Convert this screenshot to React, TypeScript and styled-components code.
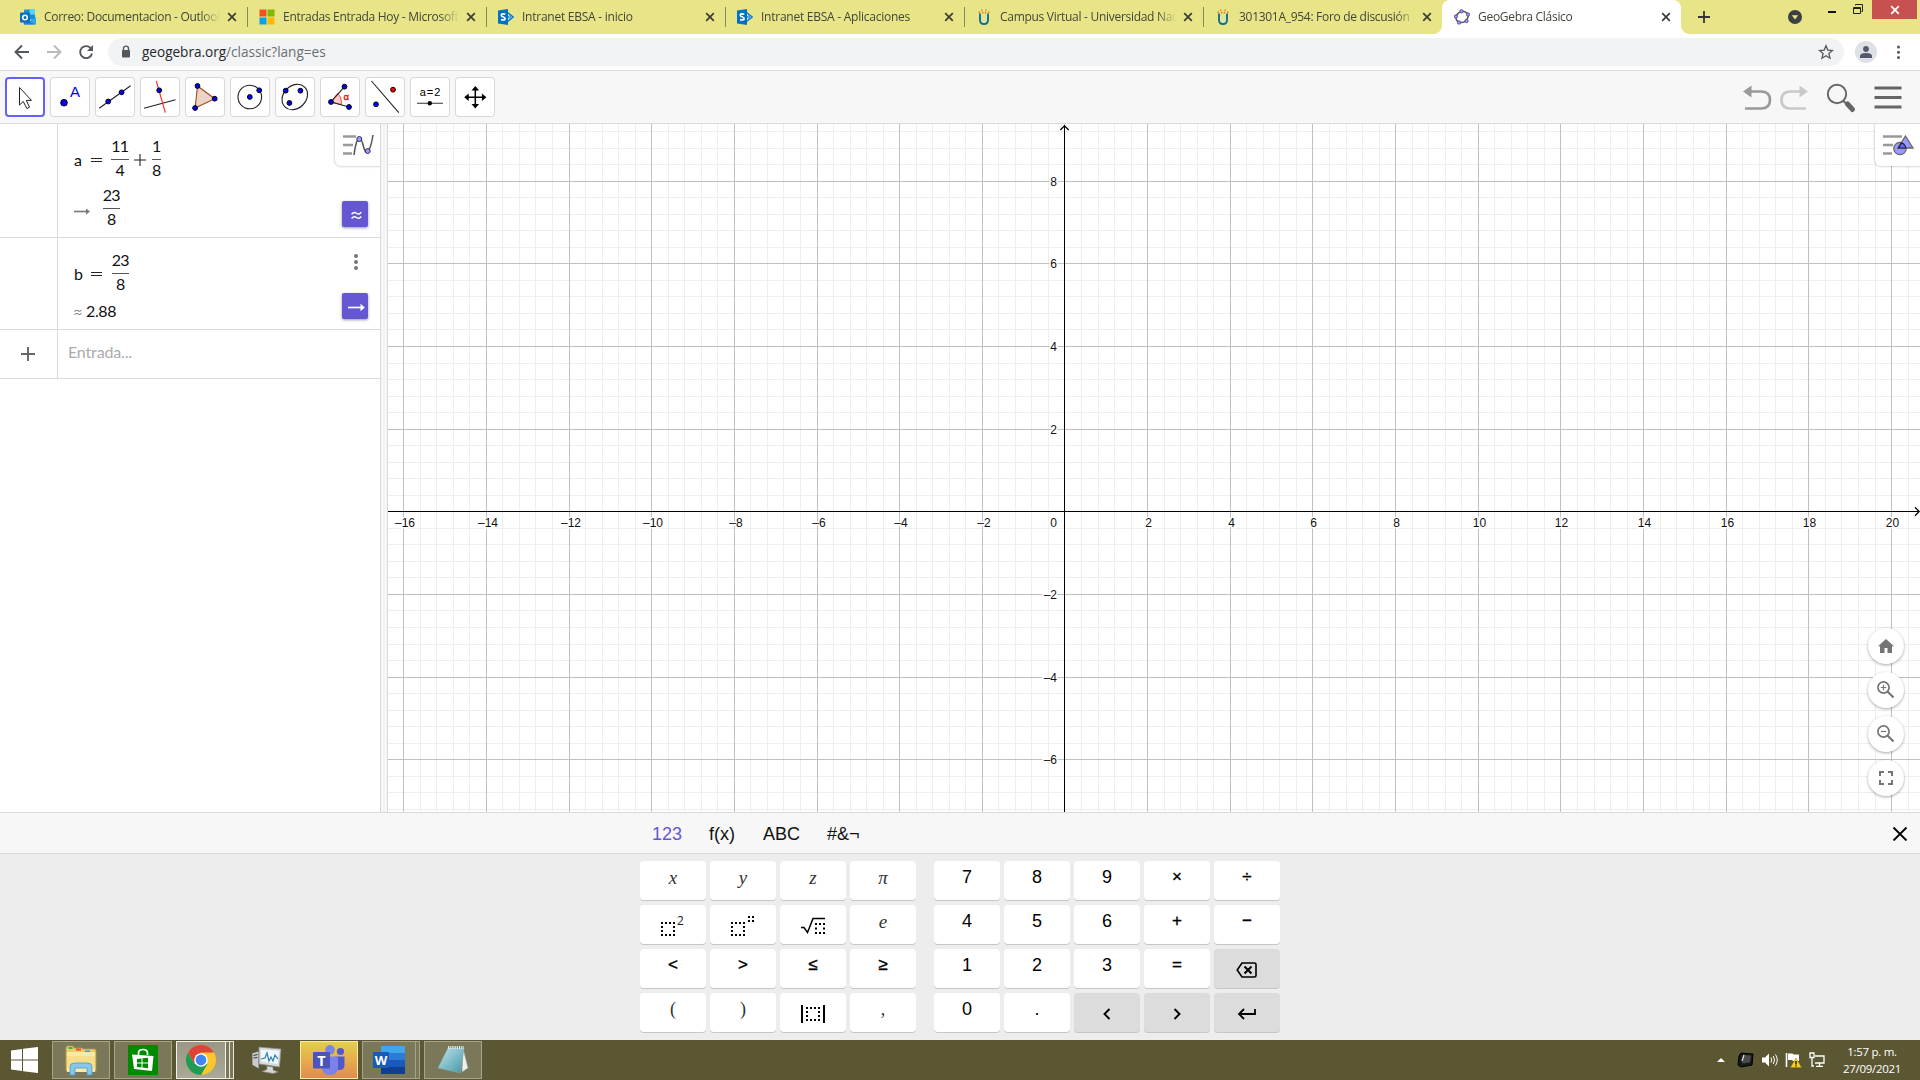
import React from 'react';
import styled, { createGlobalStyle, css } from 'styled-components';

const ui = `'Open Sans', 'Noto Sans', sans-serif`;
const arial = `'Liberation Sans', Arial, sans-serif`;
const serif = `'Liberation Serif', 'Times New Roman', serif`;
const math = `Lato, 'Open Sans', sans-serif`;

const GlobalStyle = createGlobalStyle`
  * { box-sizing: border-box; }
  body { margin: 0; background: #fff; overflow: hidden; }
  svg { display: block; flex: none; }
`;

const Screen = styled.div`
  width: 1920px;
  height: 1080px;
  display: flex;
  flex-direction: column;
  overflow: hidden;
  font-family: ${arial};
`;

/* ---------- Browser chrome ---------- */

const TabStrip = styled.div`
  height: 34px;
  flex: none;
  display: flex;
  padding-left: 8px;
  background: #e8e488;
`;

const Tab = styled.div<{ $active?: boolean; $last?: boolean }>`
  position: relative;
  width: 239px;
  height: 34px;
  flex: none;
  display: flex;
  align-items: center;
  padding: 0 9px 0 12px;
  ${p =>
    p.$active
      ? css`
          background: #fff;
          border-radius: 8px 8px 0 0;
          &::before,
          &::after {
            content: '';
            position: absolute;
            bottom: 0;
            width: 8px;
            height: 8px;
          }
          &::before {
            left: -8px;
            background: radial-gradient(circle at 0 0, transparent 7.5px, #fff 8px);
          }
          &::after {
            right: -8px;
            background: radial-gradient(circle at 100% 0, transparent 7.5px, #fff 8px);
          }
        `
      : !p.$last &&
        css`
          &::after {
            content: '';
            position: absolute;
            right: -1px;
            top: 7px;
            width: 1px;
            height: 20px;
            background: #89875a;
          }
        `}
`;

const TabTitle = styled.div<{ $spacing: number }>`
  width: 177px;
  margin-left: 8px;
  overflow: hidden;
  white-space: nowrap;
  font: 12px/18px ${ui};
  letter-spacing: ${p => p.$spacing}px;
  color: #45453c;
  mask-image: linear-gradient(90deg, #000 157px, transparent 176px);
`;

const TabClose = styled.div`
  margin-left: auto;
  width: 12px;
  display: flex;
  justify-content: center;
`;

const NewTab = styled.div`
  width: 46px;
  display: flex;
  align-items: center;
  justify-content: center;
`;

const WindowControls = styled.div`
  margin-left: auto;
  display: flex;
  align-items: flex-start;
`;

const TabSearch = styled.div`
  padding: 10px 18px 0 0;
`;

const WindowButton = styled.div<{ $w: number; $top: number }>`
  width: ${p => p.$w}px;
  padding-top: ${p => p.$top}px;
  display: flex;
  justify-content: center;
`;

const WindowClose = styled.div`
  width: 45px;
  height: 19px;
  margin-right: 3px;
  background: #c75050;
  display: flex;
  align-items: center;
  justify-content: center;
`;

const AddressBar = styled.div`
  height: 37px;
  flex: none;
  display: flex;
  align-items: center;
  padding: 0 12px 1px 13px;
  background: #fff;
  border-bottom: 1px solid #dadadc;
`;

const NavButtons = styled.div`
  display: flex;
  gap: 14px;
  width: 95px;
`;

const Omnibox = styled.div`
  flex: 1;
  height: 28px;
  border-radius: 14px;
  background: #f1f3f4;
  display: flex;
  align-items: center;
  padding: 0 10px 0 12px;
`;

const Url = styled.div`
  margin-left: 10px;
  font: 13.6px/20px ${ui};
  letter-spacing: -0.02px;
  color: #6a6e73;
  span { color: #26282b; }
`;

const Spacer = styled.div`
  flex: 1;
`;

const Avatar = styled.div`
  width: 22px;
  height: 22px;
  margin: 0 15px 0 11px;
  border-radius: 50%;
  background: #dee1e6;
  display: flex;
  align-items: center;
  justify-content: center;
`;

/* ---------- GeoGebra toolbar ---------- */

const Toolbar = styled.div`
  height: 53px;
  flex: none;
  display: flex;
  align-items: center;
  gap: 5px;
  padding: 0 18px 1px 5px;
  background: #f7f7f7;
  border-bottom: 1px solid #dadadc;
`;

const Tool = styled.div<{ $selected?: boolean }>`
  width: 40px;
  height: 40px;
  background: #fff;
  border-radius: 4px;
  box-shadow: inset 0 0 0 ${p => (p.$selected ? '2px #6161ff' : '1px #d8d8d8')};
`;

const ToolbarActions = styled.div`
  margin-left: auto;
  display: flex;
  align-items: center;
`;

/* ---------- Work area ---------- */

const Work = styled.div`
  height: 688px;
  flex: none;
  display: flex;
`;

const Algebra = styled.div`
  position: relative;
  width: 381px;
  border-right: 1px solid #dadadc;
  background: #fff;
`;

const Splitter = styled.div`
  width: 7px;
  background: #f5f5f5;
  border-right: 1px solid #dadadc;
`;

const Row = styled.div<{ $h: number }>`
  height: ${p => p.$h}px;
  display: flex;
  border-bottom: 1px solid #dadadc;
`;

const RowMarker = styled.div`
  width: 58px;
  border-right: 1px solid #dadadc;
  display: flex;
  align-items: center;
  padding-left: 21px;
`;

const RowBody = styled.div`
  flex: 1;
  padding: 17px 0 0 16px;
  display: flex;
  flex-direction: column;
`;

const RowSide = styled.div`
  width: 38px;
  display: flex;
  flex-direction: column;
  justify-content: flex-end;
  padding-bottom: 10px;
`;

const Formula = styled.div<{ $top?: number; $h?: number }>`
  height: ${p => p.$h ?? 38}px;
  margin-top: ${p => p.$top ?? 0}px;
  display: flex;
  align-items: center;
  font: 16px/20px ${math};
  color: #111;
`;

const Term = styled.span<{ $w: number }>`
  width: ${p => p.$w}px;
  height: 20px;
  display: flex;
  align-items: center;
  line-height: 18px;
`;

const Value = styled.span`
  height: 21px;
  letter-spacing: -0.4px;
`;

const Fraction = styled.span<{ $w: number }>`
  width: ${p => p.$w}px;
  display: flex;
  flex-direction: column;
  letter-spacing: -0.9px;
  text-align: center;
  span {
    height: 19px;
    text-indent: -0.5px;
  }
  span:first-child {
    line-height: 10px;
    border-bottom: 1px solid #555;
  }
  span:last-child {
    line-height: 20px;
  }
`;

const OutputToggle = styled.div`
  width: 26px;
  height: 26px;
  border-radius: 2px;
  background: #6557d2;
  box-shadow: 0 1px 3px rgba(0, 0, 0, 0.4);
  display: flex;
  align-items: center;
  justify-content: center;
`;

const MoreDots = styled.div`
  width: 28px;
  margin-bottom: 23px;
  display: flex;
  justify-content: center;
`;

const Placeholder = styled.div`
  padding: 12px 0 0 10px;
  font: 16px/20px ${math};
  letter-spacing: -0.15px;
  color: #aaa;
`;

const ViewButton = styled.div<{ $w: number }>`
  position: absolute;
  top: 0;
  right: 0;
  width: ${p => p.$w}px;
  height: 42px;
  background: #fff;
  border-bottom-left-radius: 6px;
  box-shadow: 0 0 2px 1px rgba(0, 0, 0, 0.16);
  clip-path: inset(0 0 -4px -4px);
`;

const Graphics = styled.div`
  position: relative;
  flex: 1;
  background: #fff;
`;

const ZoomStack = styled.div`
  position: absolute;
  right: 16px;
  top: 504px;
  display: flex;
  flex-direction: column;
  gap: 8px;
`;

const RoundButton = styled.div`
  width: 36px;
  height: 36px;
  border-radius: 50%;
  background: #fff;
  box-shadow: 0 1px 3px rgba(0, 0, 0, 0.35);
  display: flex;
  align-items: center;
  justify-content: center;
`;

/* ---------- Keyboard ---------- */

const KeyboardHeader = styled.div`
  height: 42px;
  flex: none;
  display: flex;
  align-items: center;
  gap: 27px;
  padding: 1px 12px 0 652px;
  background: #f7f7f7;
  border-top: 1px solid #dadadc;
  border-bottom: 1px solid #dadadc;
  font: 18px/24px ${arial};
  color: #111;
`;

const KeyboardTab = styled.div<{ $w: number; $active?: boolean }>`
  width: ${p => p.$w}px;
  white-space: nowrap;
  color: ${p => (p.$active ? '#6557d2' : '#111')};
`;

const Keyboard = styled.div`
  height: 186px;
  flex: none;
  display: flex;
  gap: 18px;
  padding: 7px 0 0 640px;
  background: #ededed;
`;

const KeyGrid = styled.div<{ $cols: number }>`
  display: grid;
  grid-template-columns: repeat(${p => p.$cols}, 66px);
  grid-auto-rows: 39px;
  gap: 5px 4px;
  align-content: start;
`;

const keyFont = {
  text: `18px/24px ${arial}`,
  op: `17px/24px ${arial}`,
  var: `italic 19px/24px ${serif}`,
  paren: `18px/24px ${serif}`,
  icon: `18px/24px ${arial}`,
  fn: `18px/24px ${arial}`,
};

const Key = styled.div<{ $kind: keyof typeof keyFont }>`
  display: flex;
  align-items: center;
  justify-content: center;
  border-radius: 4px;
  background: ${p => (p.$kind === 'fn' ? '#dcdcdc' : '#fff')};
  box-shadow: 0 1px 0 #c6c6c6;
  padding-bottom: ${p => (p.$kind === 'icon' || p.$kind === 'fn' ? 0 : p.$kind === 'var' ? 5 : 7)}px;
  padding-top: ${p => (p.$kind === 'icon' || p.$kind === 'fn' ? 3 : 0)}px;
  font: ${p => keyFont[p.$kind]};
  color: ${p => (p.$kind === 'var' || p.$kind === 'paren' ? '#333' : '#000')};
  ${p => p.$kind === 'op' && '-webkit-text-stroke: 0.35px #000;'}
`;

/* ---------- Taskbar ---------- */

const Taskbar = styled.div`
  height: 40px;
  flex: none;
  display: flex;
  padding: 1px 0 1px 0;
  background: #5b5733;
`;

const Start = styled.div`
  width: 52px;
  display: flex;
  align-items: center;
  justify-content: center;
  padding-right: 3px;
`;

const taskTone = {
  plain: css`background: #7b785a; border-color: #a5a38c;`,
  active: css`background: linear-gradient(#9a9784, #aaa897); border-color: #f3f2ee;`,
  alert: css`background: linear-gradient(#e2cf4b, #e7a94c 55%, #df8b52); border-color: #fbe9a4;`,
  none: css`background: none; border-color: transparent;`,
};

const Task = styled.div<{ $tone: keyof typeof taskTone; $w?: number }>`
  width: ${p => p.$w ?? 58}px;
  height: 38px;
  margin-right: 4px;
  border: 1px solid;
  display: flex;
  align-items: center;
  justify-content: center;
  ${p => taskTone[p.$tone]}
`;

const TaskEdge = styled.div<{ $bright?: boolean }>`
  width: 4px;
  height: 38px;
  border: 1px solid ${p => (p.$bright ? '#e8e7e0' : '#a5a38c')};
  border-left: none;
  background: #7b785a;
`;

const TaskGroup = styled.div<{ $w: number }>`
  width: ${p => p.$w}px;
  display: flex;
  margin-right: 4px;
  & > ${Task} { margin-right: 0; }
`;

const Tray = styled.div`
  margin-left: auto;
  display: flex;
  align-items: center;
  gap: 7px;
`;

const TrayArrow = styled.div`
  margin-right: 5px;
`;

const Clock = styled.div`
  width: 96px;
  margin-left: -8px;
  text-align: center;
  font: 11.5px/17px ${ui};
  letter-spacing: -0.3px;
  color: #fff;
`;

/* ---------- Drawings ---------- */

const Cross = ({ size = 8, color = '#3c3c36', w = 1.7 }: { size?: number; color?: string; w?: number }) => (
  <svg width={size} height={size} viewBox="0 0 8 8" overflow="visible">
    <path d="M0.2 0.2 7.8 7.8M7.8 0.2 0.2 7.8" stroke={color} strokeWidth={(w * 8) / size} />
  </svg>
);

const OutlookIcon = () => (
  <svg width="16" height="16" viewBox="0 0 16 16">
    <rect x="4" y="0.5" width="11" height="10" rx="0.8" fill="#1490df" />
    <path d="M9.5.5H15v5H9.5z" fill="#50d9ff" />
    <path d="M4 5.5h5.5v5H4z" fill="#0364b8" />
    <path d="M3 9l6.5 3L16 8v6.7q0 .8-.8.8H4z" fill="#28a8ea" />
    <path d="M3 9l12.5 6.4H4z" fill="#1784d8" />
    <rect x="0" y="3.500" width="10" height="10" rx="0.8" fill="#0f6cbd" />
    <circle cx="5" cy="8.500" r="2.300" fill="none" stroke="#fff" strokeWidth="1.500" />
  </svg>
);

const MicrosoftIcon = () => (
  <svg width="16" height="16" viewBox="0 0 16 16">
    <path d="M.5.5h7v7h-7z" fill="#f25022" />
    <path d="M8.5.5h7v7h-7z" fill="#7fba00" />
    <path d="M.5 8.500h7v7h-7z" fill="#00a4ef" />
    <path d="M8.500 8.500h7v7h-7z" fill="#ffb900" />
  </svg>
);

const SharepointIcon = () => (
  <svg width="16" height="16" viewBox="0 0 16 16">
    <path d="M9.500 3.500l5.800 4.500-5.800 4.500z" fill="#fff" stroke="#0072c6" strokeWidth="1.300" />
    <circle cx="11.800" cy="8" r="1.200" fill="#fff" stroke="#0072c6" />
    <path d="M0 1.500 10 0v16L0 14.500z" fill="#0072c6" />
    <path d="M7.300 5.300Q3.300 4.100 3.300 6.200 3.300 7.400 5.300 8t1.800 1.900Q6.800 11.600 3 10.700" fill="none" stroke="#fff" strokeWidth="1.700" />
  </svg>
);

const UnadIcon = () => (
  <svg width="16" height="16" viewBox="0 0 16 16">
    <path d="M4 4.500v6.500q0 4 4 4t4-4V4.500" fill="none" stroke="#16707f" strokeWidth="1.900" />
    <path d="M5.600 5v6q0 2.300 2.400 2.300t2.400-2.300V5" fill="none" stroke="#bfe6ef" strokeWidth="0.900" />
    <path d="M2.500 3.200h1.500M5 1.200h1.300M9.500 1.200h1.300M12 3.200h1.500M6 3.600h1.400M8.800 3.600h1.400" stroke="#ea7a1c" strokeWidth="1.600" />
  </svg>
);

const GeogebraIcon = () => (
  <svg width="16" height="16" viewBox="0 0 16 16">
    <ellipse cx="8" cy="8" rx="6.300" ry="5.300" transform="rotate(-30 8 8)" fill="none" stroke="#55555a" strokeWidth="1.500" />
    {[[7.500, 2.300], [14, 5.500], [12.500, 12], [5, 13.500], [1.900, 7.500]].map(([x, y]) => (
      <circle key={x} cx={x} cy={y} r="1.700" fill="#9999ff" stroke="#44447c" strokeWidth="0.800" />
    ))}
  </svg>
);

const Dot = ({ x, y, r = 2.4, fill = '#00f' }: { x: number; y: number; r?: number; fill?: string }) => (
  <circle cx={x} cy={y} r={r} fill={fill} stroke="#000" strokeWidth="1" />
);

const tools: React.ReactNode[] = [
  <path d="M14.500 10.500v17.500l3.800-3.500 3.500 7 2.700-1.300-3.200-6.800h5.200z" fill="#fff" stroke="#222" />,
  <>
    <Dot x={14} y={25.700} r={3.300} />
    <text x="20" y="20" fontSize="15" fill="#00f">A</text>
  </>,
  <>
    <path d="M4.200 31.300 35.600 8.700" stroke="#222" strokeWidth="1.100" />
    <Dot x={13.200} y={24.500} /><Dot x={26.600} y={15.300} />
  </>,
  <>
    <path d="M4 31.300 35.500 22.700" stroke="#222" strokeWidth="1.100" />
    <path d="M16.300 4 25.300 35.700" stroke="#f33" strokeWidth="1.200" />
    <Dot x={19.200} y={13.300} />
  </>,
  <>
    <path d="M12.500 9 29.700 21.700 10.100 31z" fill="#ebd3c7" stroke="#a04a1c" strokeWidth="1.100" />
    <Dot x={12.500} y={9} /><Dot x={29.700} y={21.700} /><Dot x={10.100} y={31} />
  </>,
  <>
    <circle cx="19.800" cy="20" r="11.800" fill="none" stroke="#222" strokeWidth="1.100" />
    <Dot x={19.800} y={20} /><Dot x={29.200} y={13.300} />
  </>,
  <>
    <ellipse cx="19.800" cy="20" rx="14" ry="11.300" transform="rotate(-45 19.800 20)" fill="none" stroke="#222" strokeWidth="1.100" />
    <Dot x={10.700} y={13.700} /><Dot x={25.400} y={13.700} /><Dot x={14.400} y={26} />
  </>,
  <>
    <path d="M11 25 17.500 16.500Q22 20 21.300 27.700z" fill="#fcc" stroke="#f44" />
    <path d="M24.500 9.700 11 25 29 30" fill="none" stroke="#222" strokeWidth="1.100" />
    <Dot x={24.500} y={9.700} /><Dot x={11} y={25} /><Dot x={29} y={30} />
    <text x="23.500" y="22.800" fontSize="9.500" fill="#e00" stroke="#e00" strokeWidth="0.300">α</text>
  </>,
  <>
    <path d="M6.400 4 33.800 35.700" stroke="#222" strokeWidth="1.100" />
    <Dot x={28} y={12.700} fill="#f00" /><Dot x={11} y={27.300} />
  </>,
  <>
    <text x="20.500" y="18.700" fontSize="11" textAnchor="middle" letterSpacing="0.900" fill="#000">a=2</text>
    <path d="M7 26.300H33" stroke="#555" strokeWidth="1.200" />
    <circle cx="19.800" cy="26.200" r="2.200" />
  </>,
  <>
    <path d="M20.300 12v17M12 20.300h17" stroke="#000" strokeWidth="1.500" />
    <path d="M20.300 9l3.800 4.600h-7.600zM20.300 31.600l3.800-4.600h-7.600zM9.200 20.300l4.500-3.800v7.600zM31.400 20.300l-4.500-3.800v7.600z" />
  </>,
];

const UNIT = 41.33;
const gx = (v: number) => Math.round(1064.49 + v * UNIT) + 0.5;
const gy = (v: number) => Math.round(511.3 - v * UNIT) + 0.5;
const range = (a: number, b: number) => Array.from({ length: b - a + 1 }, (_, i) => a + i);
const label = (v: number) => (v < 0 ? `–${-v}` : `${v}`);

const Plot = () => (
  <svg width="1532" height="688" viewBox="388 124 1532 688" fontFamily={arial}>
    <g stroke="#eeeeee">
      {range(-40, 51).filter(i => i % 5).map(i => <path key={i} d={`M${gx(i * 0.4)} 124V812`} />)}
      {range(-18, 23).filter(i => i % 5).map(i => <path key={i} d={`M388 ${gy(i * 0.4)}H1920`} />)}
    </g>
    <g stroke="#c0c0c0">
      {range(-8, 10).map(i => <path key={i} d={`M${gx(i * 2)} 124V812`} />)}
      {range(-3, 4).map(i => <path key={i} d={`M388 ${gy(i * 2)}H1920`} />)}
    </g>
    <path d="M1064.500 125V812M388 511.500H1919" fill="none" stroke="#000" />
    <path d="M1060.300 130 1064.500 125.800 1068.700 130M1915 507.300 1919.200 511.500 1915 515.700" fill="none" stroke="#000" strokeWidth="1.300" />
    <g fontSize="12" fill="#111" stroke="#fff" strokeWidth="3" paintOrder="stroke">
      {range(-8, 10).filter(Boolean).map(i => (
        <text key={i} x={gx(i * 2) + (i < 0 ? 1.5 : 1)} y="527" textAnchor="middle">{label(i * 2)}</text>
      ))}
      {range(-3, 4).filter(Boolean).map(i => (
        <text key={i} x="1057" y={gy(i * 2) + 4.5} textAnchor="end">{label(i * 2)}</text>
      ))}
      <text x="1057" y="527" textAnchor="end">0</text>
    </g>
  </svg>
);

const DottedBox = ({ x, y, n = 4 }: { x: number; y: number; n?: number }) => (
  <g>
    {range(0, n - 1).flatMap(i => range(0, n - 1).map(j =>
      i === 0 || j === 0 || i === n - 1 || j === n - 1 ? <rect key={`${i}${j}`} x={x + i * 4} y={y + j * 4} width="2" height="2" /> : null,
    ))}
  </g>
);

const RootIcon = () => (
  <svg width="26" height="18" viewBox="0 0 26 18">
    <path d="M1 10.500h3l3.500 5L13 1.500h12" fill="none" stroke="#000" strokeWidth="1.500" />
    {range(0, 2).flatMap(i => range(0, 2).map(j => i === 1 && j === 1 ? null : <rect key={`${i}${j}`} x={15 + i * 4} y={6 + j * 4.500} width="2" height="2" />))}
    <path d="M15 7h10M15 16h10" stroke="#000" strokeWidth="1.800" strokeDasharray="2 2" />
  </svg>
);

const PowIcon = ({ two }: { two?: boolean }) => (
  <svg width="24" height="20" viewBox="1 0 24 20">
    <DottedBox x={1} y={6} />
    {two ? <text x="17" y="9" fontSize="12" fontFamily={ui} fill="#222">2</text> : <path d="M18 1h2M22 1h2M18 5h2M22 5h2" stroke="#000" strokeWidth="2" />}
  </svg>
);

const AbsIcon = () => (
  <svg width="24" height="18" viewBox="0 0 24 18">
    <path d="M1 0v18M23 0v18" stroke="#000" strokeWidth="2" />
    <DottedBox x={5} y={2} />
  </svg>
);

const BackspaceIcon = () => (
  <svg width="22" height="16" viewBox="0 0 22 16" fill="none" stroke="#000" strokeWidth="1.600">
    <path d="M6 1H18.500Q20 1 20 2.500V13.500Q20 15 18.500 15H6L1.200 8z" />
    <path d="M8.500 4.500l7 7M15.500 4.500l-7 7" strokeWidth="2" />
  </svg>
);

const Chevron = ({ flip }: { flip?: boolean }) => (
  <svg width="8" height="12" viewBox="0 0 8 12">
    <path d={flip ? 'M1.500 1l5 5-5 5' : 'M6.500 1l-5 5 5 5'} fill="none" stroke="#000" strokeWidth="1.900" />
  </svg>
);

const EnterIcon = () => (
  <svg width="20" height="12" viewBox="0 0 20 12">
    <path d="M18 1v5H2M7 1L2 6l5 5" fill="none" stroke="#000" strokeWidth="1.800" />
  </svg>
);

type KeyDef = { label: React.ReactNode; kind: keyof typeof keyFont };
const v = (s: string): KeyDef => ({ label: s, kind: 'var' });
const k = (s: string): KeyDef => ({ label: s, kind: 'text' });
const op = (s: string): KeyDef => ({ label: s, kind: 'op' });

const leftKeys: KeyDef[] = [
  v('x'), v('y'), v('z'), v('π'),
  { label: <PowIcon two />, kind: 'icon' }, { label: <PowIcon />, kind: 'icon' }, { label: <RootIcon />, kind: 'icon' }, v('e'),
  op('<'), op('>'), op('≤'), op('≥'),
  { label: '(', kind: 'paren' }, { label: ')', kind: 'paren' }, { label: <AbsIcon />, kind: 'icon' }, { label: ',', kind: 'paren' },
];
const rightKeys: KeyDef[] = [
  k('7'), k('8'), k('9'), op('×'), op('÷'),
  k('4'), k('5'), k('6'), op('+'), op('−'),
  k('1'), k('2'), k('3'), op('='), { label: <BackspaceIcon />, kind: 'fn' },
  k('0'), k('.'), { label: <Chevron />, kind: 'fn' }, { label: <Chevron flip />, kind: 'fn' }, { label: <EnterIcon />, kind: 'fn' },
];

const tabs = [
  { icon: <OutlookIcon />, title: 'Correo: Documentacion - Outlook', s: -0.29 },
  { icon: <MicrosoftIcon />, title: 'Entradas Entrada Hoy - Microsoft D', s: -0.29 },
  { icon: <SharepointIcon />, title: 'Intranet EBSA - inicio', s: -0.25 },
  { icon: <SharepointIcon />, title: 'Intranet EBSA - Aplicaciones', s: -0.25 },
  { icon: <UnadIcon />, title: 'Campus Virtual - Universidad Nacional', s: -0.29 },
  { icon: <UnadIcon />, title: '301301A_954: Foro de discusión - U', s: -0.29 },
  { icon: <GeogebraIcon />, title: 'GeoGebra Clásico', s: -0.29 },
];

const Magnifier = ({ sign }: { sign: string }) => (
  <svg width="20" height="20" viewBox="0 0 20 20" fill="none" stroke="#757575">
    <circle cx="7.500" cy="7.500" r="5.600" strokeWidth="1.700" />
    <path d="M11.500 11.500l6 6" strokeWidth="2.100" />
    <path d={sign} strokeWidth="1.200" />
  </svg>
);

const ExplorerIcon = () => (
  <svg width="34" height="32" viewBox="0 0 34 32">
    <path d="M2 4q0-2 2-2h5l1 2h8l1 1h11q2 0 2 2v20H2z" fill="#eacb6c" stroke="#b99a45" strokeWidth="0.800" />
    <path d="M4.500 3h4v2h-4z" fill="#3cb54a" /><path d="M12 4.500h5v2h-5z" fill="#e4552e" /><path d="M21 6.500h5v2h-5z" fill="#3a9ad9" />
    <path d="M3 8h28v20H3z" fill="#f9eaa6" />
    <path d="M3 12h28v12H3z" fill="#f5df8b" />
    <path d="M6 31v-8q0-4 4-4h14q4 0 4 4v8h-5v-7H11v7z" fill="#85c8ec" stroke="#4a9bcd" strokeWidth="0.800" />
  </svg>
);

const StoreIcon = () => (
  <svg width="30" height="30" viewBox="0 0 30 30">
    <path d="M0 0h30v30H0z" fill="#008a00" />
    <path d="M10.500 10V8q0-3.500 4.500-3.500T19.500 8v2" fill="none" stroke="#fff" strokeWidth="1.700" />
    <path d="M4 9.500 25.500 11 24 26 6 24z" fill="#fff" />
    <path d="M9 14l4.500-.5v4H9zM14.500 13.300l5.500-.5v4.700h-5.500zM9 18.500h4.500v4L9 22zM14.500 18.500H20v4.700l-5.500-.6z" fill="#008a00" />
  </svg>
);

const ChromeIcon = () => (
  <svg width="30" height="30" viewBox="0 0 30 30">
    <circle cx="15" cy="15" r="15" fill="#fbc52c" />
    <path d="M2 7.500A15 15 0 0 1 28 7.500H15L8.500 18.700z" fill="#db4437" />
    <path d="M2 7.500A15 15 0 0 0 15 30L21.500 18.700H8.500z" fill="#219a55" />
    <circle cx="15" cy="15" r="6.800" fill="#fff" />
    <circle cx="15" cy="15" r="5.400" fill="#4285f4" />
  </svg>
);

const MonitorIcon = () => (
  <svg width="30" height="28" viewBox="0 0 30 28">
    <path d="M0 7l7-2v18l-7-4z" fill="#c9ccca" stroke="#555" strokeWidth="0.800" />
    <path d="M1.500 9.500l4-1M1.500 12l4-.5" stroke="#333" />
    <path d="M7 1l22 2-1.500 18L7 18z" fill="#d7dadb" stroke="#888" strokeWidth="0.800" />
    <path d="M9 3.500l18 1.500-1.300 13L9 15.500z" fill="#eff8fb" />
    <path d="M9 13l4-1 2-5 2 8 2-4 2 4 2-6 3 4" fill="none" stroke="#2c7fae" strokeWidth="1.200" />
    <path d="M15 20l6 1v3l5 2-5 1.500-11-2 5-2z" fill="#d4d6d4" stroke="#888" strokeWidth="0.700" />
  </svg>
);

const TeamsIcon = () => (
  <svg width="32" height="30" viewBox="0 0 32 30">
    <circle cx="17" cy="4.800" r="4.800" fill="#7b83eb" /><circle cx="27.500" cy="6.500" r="3.600" fill="#5059c9" />
    <path d="M22 11.500h9.500v8.500q0 5-5 5t-4.500-3z" fill="#5059c9" />
    <path d="M9 11.500h16v11q0 7.500-8 7.500t-8-7.500z" fill="#7b83eb" />
    <rect x="0" y="7" width="17" height="16.500" rx="1" fill="#4b53bc" />
    <text x="8.500" y="20.500" fontSize="14.500" fontWeight="700" textAnchor="middle" fill="#fff" fontFamily={ui}>T</text>
  </svg>
);

const WordIcon = () => (
  <svg width="32" height="28" viewBox="0 0 32 28">
    <path d="M8 0h24v7H8z" fill="#41a5ee" /><path d="M8 7h24v7H8z" fill="#2b7cd3" />
    <path d="M8 14h24v7H8z" fill="#185abd" /><path d="M8 21h24v7H8z" fill="#103f91" />
    <rect x="0" y="6" width="16" height="16" rx="1" fill="#185abd" />
    <text x="8" y="19" fontSize="13" fontWeight="700" textAnchor="middle" fill="#fff" fontFamily={ui}>W</text>
  </svg>
);

const NotepadIcon = () => (
  <svg width="32" height="30" viewBox="0 0 32 30">
    <defs>
      <linearGradient id="pad" x1="0" y1="0" x2="1" y2="1"><stop offset="0" stopColor="#bfe6ec" /><stop offset="1" stopColor="#4396a8" /></linearGradient>
    </defs>
    <path d="M26 3l5 20-6 4z" fill="#f0f0ea" stroke="#999" strokeWidth="0.500" />
    <path d="M11 3h16l-3.500 25L1 23z" fill="url(#pad)" stroke="#8aa" strokeWidth="0.500" />
    <path d="M11 2.500h16" stroke="#e8e8e8" strokeWidth="3" strokeDasharray="1.200 1" />
  </svg>
);

export default function App() {
  return (
    <Screen>
      <GlobalStyle />
      <TabStrip>
        {tabs.map((t, i) => (
          <Tab key={t.title} $active={i === 6} $last={i === 5}>
            {t.icon}
            <TabTitle $spacing={t.s}>{t.title}</TabTitle>
            <TabClose><Cross /></TabClose>
          </Tab>
        ))}
        <NewTab>
          <svg width="12" height="12" viewBox="0 0 12 12"><path d="M6 0v12M0 6h12" stroke="#333" strokeWidth="1.800" /></svg>
        </NewTab>
        <WindowControls>
          <TabSearch>
            <svg width="14" height="14" viewBox="0 0 14 14"><circle cx="7" cy="7" r="7" fill="#3c4043" /><path d="M3.800 5.200h6.400L7 9.500z" fill="#e8e488" /></svg>
          </TabSearch>
          <WindowButton $w={24} $top={11}>
            <svg width="8" height="2"><path d="M0 1h8" stroke="#111" strokeWidth="2" /></svg>
          </WindowButton>
          <WindowButton $w={28} $top={4}>
            <svg width="10" height="10" viewBox="0 0 10 10" fill="none" stroke="#222"><path d="M.5 3.500h7v6h-7zM.5 4.500h7" /><path d="M2.500 1.500v-1h7v7h-1" /></svg>
          </WindowButton>
          <WindowClose><Cross color="#fff" /></WindowClose>
        </WindowControls>
      </TabStrip>

      <AddressBar>
        <NavButtons>
          <svg width="18" height="16" viewBox="0 0 18 16"><path d="M16 8H3M9 1.500 2.500 8 9 14.500" fill="none" stroke="#54585d" strokeWidth="1.900" /></svg>
          <svg width="18" height="16" viewBox="0 0 18 16"><path d="M2 8h13M9 1.500 15.500 8 9 14.500" fill="none" stroke="#b8babd" strokeWidth="1.900" /></svg>
          <svg width="18" height="16" viewBox="0 0 18 16"><path d="M14.300 5A6 6 0 1 0 15 9.500" fill="none" stroke="#54585d" strokeWidth="1.900" /><path d="M16 1v6h-6z" fill="#54585d" /></svg>
        </NavButtons>
        <Omnibox>
          <svg width="12" height="14" viewBox="0 0 12 14"><rect x="2" y="5" width="8" height="7.500" rx="1" fill="#54585d" /><path d="M3.500 6V3.600a2.500 2.500 0 0 1 5 0V6" fill="none" stroke="#54585d" strokeWidth="1.400" /></svg>
          <Url><span>geogebra.org</span>/classic?lang=es</Url>
          <Spacer />
          <svg width="16" height="16" viewBox="0 0 16 16"><path d="M8 1.800l1.800 4.300 4.700.4-3.600 3.100 1.100 4.600L8 11.700l-4 2.500 1.100-4.600L1.500 6.500l4.700-.4z" fill="none" stroke="#54585d" strokeWidth="1.300" /></svg>
        </Omnibox>
        <Avatar>
          <svg width="12" height="12" viewBox="0 0 12 12"><circle cx="6" cy="3" r="2.900" fill="#525a6b" /><path d="M0 12V10q0-3 6-3t6 3v2z" fill="#525a6b" /></svg>
        </Avatar>
        <svg width="16" height="16" viewBox="0 0 16 16" fill="#54585d"><circle cx="6.500" cy="3" r="1.500" /><circle cx="6.500" cy="8.300" r="1.500" /><circle cx="6.500" cy="13.500" r="1.500" /></svg>
      </AddressBar>

      <Toolbar>
        {tools.map((icon, i) => (
          <Tool key={i} $selected={i === 0}>
            <svg width="40" height="40" viewBox="0 0 40 40" fontFamily={arial}>{icon}</svg>
          </Tool>
        ))}
        <ToolbarActions>
          <svg width="162" height="40" viewBox="1740 77 162 40" fill="none">
            <path d="M1750 91.500h11q9 0 9 8.500t-9 8.500h-16" stroke="#999" strokeWidth="2.700" />
            <path d="M1743 91.500l8.500-6v12z" fill="#999" />
            <path d="M1801 91.500h-10q-9.500 0-9.500 8.500t9.500 8.500h15" stroke="#c9c9c9" strokeWidth="2.700" />
            <path d="M1808 91.500l-8.500-6v12z" fill="#c9c9c9" />
            <circle cx="1837" cy="94" r="9.200" stroke="#666" strokeWidth="1.900" />
            <path d="M1843.500 101l4 4" stroke="#666" strokeWidth="2" />
            <path d="M1847.500 104l5 5.500" stroke="#666" strokeWidth="5" strokeLinecap="round" />
            <path d="M1874.500 88h27M1874.500 97.500h27M1874.500 107h27" stroke="#666" strokeWidth="3" />
          </svg>
        </ToolbarActions>
      </Toolbar>

      <Work>
        <Algebra>
          <Row $h={114}>
            <RowMarker />
            <RowBody>
              <Formula>
                <Term $w={17}>a</Term>
                <Term $w={20}><svg width="11" height="6"><path d="M0 1.500h11M0 4.500h11" stroke="#222" /></svg></Term>
                <Fraction $w={18}><span>11</span><span>4</span></Fraction>
                <Term $w={23}><svg width="23" height="12"><path d="M5 6h12M11 0v12" stroke="#222" strokeWidth="1.100" /></svg></Term>
                <Fraction $w={9}><span>1</span><span>8</span></Fraction>
              </Formula>
              <Formula $top={11}>
                <Term $w={29}><svg width="16" height="7" viewBox="0 0 16 7" transform="translate(0 2)"><path d="M0 3.500h13" stroke="#777" strokeWidth="1.600" /><path d="M12 .5l4 3-4 3z" fill="#777" /></svg></Term>
                <Fraction $w={17}><span>23</span><span>8</span></Fraction>
              </Formula>
            </RowBody>
            <RowSide>
              <OutputToggle>
                <svg width="11" height="9" viewBox="0 0 11 9" transform="translate(1 1)"><path d="M.5 3.200q2.500-3 5-1t4.800-1M.5 7.500q2.500-3 5-1t4.800-1" fill="none" stroke="#fff" strokeWidth="1.400" /></svg>
              </OutputToggle>
            </RowSide>
          </Row>
          <Row $h={92}>
            <RowMarker />
            <RowBody>
              <Formula>
                <Term $w={17}>b</Term>
                <Term $w={21}><svg width="11" height="6"><path d="M0 1.500h11M0 4.500h11" stroke="#222" /></svg></Term>
                <Fraction $w={17}><span>23</span><span>8</span></Fraction>
              </Formula>
              <Formula $top={8} $h={20}>
                <Term $w={12}><svg width="8" height="7" viewBox="0 0 11 9" transform="translate(0 1)"><path d="M.5 3.200q2.500-3 5-1t4.800-1M.5 7.500q2.500-3 5-1t4.800-1" fill="none" stroke="#555" strokeWidth="1.200" /></svg></Term>
                <Value>2.88</Value>
              </Formula>
            </RowBody>
            <RowSide>
              <MoreDots>
                <svg width="4" height="16" viewBox="0 0 4 16" fill="#757575"><circle cx="2" cy="2" r="2" /><circle cx="2" cy="8" r="2" /><circle cx="2" cy="14" r="2" /></svg>
              </MoreDots>
              <OutputToggle>
                <svg width="17" height="9" viewBox="0 0 17 9" transform="translate(1 1)"><path d="M0 4.500h14" stroke="#fff" strokeWidth="1.700" /><path d="M12.500.8l4.300 3.700-4.300 3.700z" fill="#fff" /></svg>
              </OutputToggle>
            </RowSide>
          </Row>
          <Row $h={49}>
            <RowMarker>
              <svg width="14" height="14"><path d="M7 0v14M0 7h14" stroke="#666" strokeWidth="1.900" /></svg>
            </RowMarker>
            <Placeholder>Entrada...</Placeholder>
          </Row>
          <ViewButton $w={45}>
            <svg width="45" height="42" viewBox="335 124 45 42" fill="none">
              <path d="M343 136.500h13M343 145h10M343 153.500h9" stroke="#999" strokeWidth="2.600" />
              <path d="M354 155q2-16 5.500-16.500 2 0 4 8t4.500 4.500q3-3 5-16" stroke="#555" strokeWidth="1.500" />
              <circle cx="359.300" cy="139" r="2.500" fill="#99f" stroke="#335" /><circle cx="367.700" cy="151" r="2.500" fill="#99f" stroke="#335" />
            </svg>
          </ViewButton>
        </Algebra>
        <Splitter />
        <Graphics>
          <Plot />
          <ViewButton $w={45}>
            <svg width="45" height="42" viewBox="1875 124 45 42" fill="none">
              <path d="M1883 136.500h19M1883 145h10M1883 153.500h9" stroke="#999" strokeWidth="2.600" />
              <circle cx="1900" cy="148.500" r="6.200" fill="#99f" stroke="#666" strokeWidth="1.300" />
              <path d="M1905.500 136l7.500 12h-15z" fill="#99f" stroke="#666" strokeWidth="1.300" />
              <path d="M1901.500 142.800q4 1.800 4.300 5.200h-7.300z" fill="#66f" stroke="#223" strokeWidth="1.200" />
            </svg>
          </ViewButton>
          <ZoomStack>
            <RoundButton><svg width="16" height="15" viewBox="0 0 16 15"><path d="M8 0l8 7.300h-2V14H9.500V9h-3v5H2V7.300H0z" fill="#757575" /></svg></RoundButton>
            <RoundButton><Magnifier sign="M7.500 4.800v5.400M4.800 7.500h5.400" /></RoundButton>
            <RoundButton><Magnifier sign="M4.800 7.500h5.400" /></RoundButton>
            <RoundButton><svg width="14" height="14" viewBox="0 0 14 14"><path d="M1 5V1h4M9 1h4v4M13 9v4H9M5 13H1V9" fill="none" stroke="#757575" strokeWidth="2" /></svg></RoundButton>
          </ZoomStack>
        </Graphics>
      </Work>

      <KeyboardHeader>
        <KeyboardTab $w={30} $active>123</KeyboardTab>
        <KeyboardTab $w={27}>f(x)</KeyboardTab>
        <KeyboardTab $w={37}>ABC</KeyboardTab>
        <KeyboardTab $w={34}>#&amp;¬</KeyboardTab>
        <Spacer />
        <svg width="16" height="14" viewBox="0 0 16 14"><path d="M1.500.500l13 13M14.500.500l-13 13" stroke="#000" strokeWidth="1.900" /></svg>
      </KeyboardHeader>
      <Keyboard>
        <KeyGrid $cols={4}>
          {leftKeys.map((d, i) => <Key key={i} $kind={d.kind}>{d.label}</Key>)}
        </KeyGrid>
        <KeyGrid $cols={5}>
          {rightKeys.map((d, i) => <Key key={i} $kind={d.kind}>{d.label}</Key>)}
        </KeyGrid>
      </Keyboard>

      <Taskbar>
        <Start>
          <svg width="27" height="26" viewBox="0 0 27 26" fill="#fff"><path d="M0 3.500l11-1.500v10.500H0zM12 1.800 27 0v12.500H12zM0 13.500h11V24L0 22.500zM12 13.500h15V26l-15-1.800z" /></svg>
        </Start>
        <Task $tone="plain"><ExplorerIcon /></Task>
        <Task $tone="plain"><StoreIcon /></Task>
        <TaskGroup $w={58}>
          <Task $tone="active" $w={50}><ChromeIcon /></Task>
          <TaskEdge $bright />
          <TaskEdge $bright />
        </TaskGroup>
        <Task $tone="none"><MonitorIcon /></Task>
        <Task $tone="alert"><TeamsIcon /></Task>
        <TaskGroup $w={58}>
          <Task $tone="plain" $w={54}><WordIcon /></Task>
          <TaskEdge />
        </TaskGroup>
        <Task $tone="plain"><NotepadIcon /></Task>
        <Tray>
          <TrayArrow><svg width="8" height="6" viewBox="0 0 8 6"><path d="M0 5l4-4 4 4z" fill="#fff" /></svg></TrayArrow>
          <svg width="18" height="16" viewBox="0 0 18 16"><path d="M4 1l12 1-1 11-11 2-3-2 1-9z" fill="#191919" stroke="#000" /><path d="M6 3l8 .5-1 7-8 1z" fill="#4b4b4b" /><path d="M5 9l2-6" stroke="#ddd" strokeWidth="1.300" /></svg>
          <svg width="16" height="14" viewBox="0 0 16 14"><path d="M0 4.500h3l4-4v13l-4-4H0z" fill="#fff" /><path d="M9 4.500q1.500 2.500 0 5M11.300 3q2.500 4 0 8M13.500 1.500q3.500 5.500 0 11" fill="none" stroke="#fff" /></svg>
          <svg width="17" height="16" viewBox="0 0 17 16"><path d="M1.500 1v14" stroke="#fff" strokeWidth="1.600" /><path d="M3 1.500h4.500l1 1H14V9H8L7 8H3z" fill="#fff" /><path d="M11 6l5.500 9.500h-11z" fill="#f8d21c" stroke="#9a7d00" strokeWidth="0.500" /><path d="M11 9v3.500M11 13.300v1.300" stroke="#000" strokeWidth="1.300" /></svg>
          <svg width="16" height="16" viewBox="0 0 16 16" fill="none" stroke="#fff" strokeWidth="1.300"><path d="M6 4h9v7H6M10.500 11v3M7 14.300h7M3 6v8h2" /><path d="M1 1h4v4.500H1z" /></svg>
          <Clock>1:57 p. m.<br />27/09/2021</Clock>
        </Tray>
      </Taskbar>
    </Screen>
  );
}
